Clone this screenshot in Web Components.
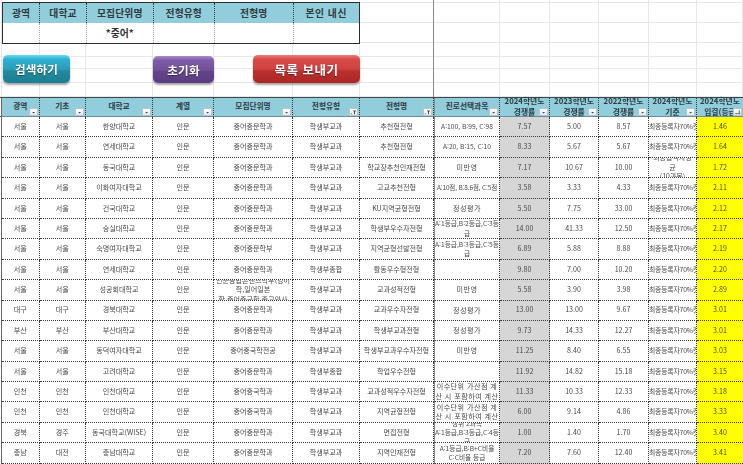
<!doctype html>
<html lang="ko"><head><meta charset="utf-8">
<style>
html,body{margin:0;padding:0;background:#fff;overflow:hidden;width:743px;height:464px}
body{font-family:"Noto Sans CJK KR","Noto Sans",sans-serif;color:#333}
</style></head><body>
<excel-sheet></excel-sheet>
<script>
const COLS=[2,37.5,46.5,67,61,79,67,74,66,50,49,50,48,46];
const TPL=`grid-template-columns:${COLS.map(c=>c+'px').join(' ')}`;
const TITLES=['광역','기초','대학교','계열','모집단위명','전형유형','전형명','진로선택과목','2024학년도<br>경쟁률','2023학년도<br>경쟁률','2022학년도<br>경쟁률','2024학년도<br>기준','2024학년도<br>입결(등급'];
const ISU='<span class="wide">이수단위 가산점 계<br>산 시 포함하여 계산</span>';
const ROWS=[
['서울','서울','한양대학교','중어중문학과','학생부교과','추천형전형','A:100, B:99, C:98','7.57','5.00','8.57','1.46'],
['서울','서울','연세대학교','중어중문학과','학생부교과','추천형전형','A:20, B:15, C:10','8.33','5.67','5.67','1.64'],
['서울','서울','동국대학교','중어중문학과','학생부교과','학교장추천인재전형','<span class="wide">미반영</span>','7.17','10.67','10.00','1.72','x'],
['서울','서울','이화여자대학교','중어중문학과','학생부교과','고교추천전형','<span class="tight">A:10점, B:8.6점, C:5점</span>','3.58','3.33','4.33','2.11'],
['서울','서울','건국대학교','중어중문학과','학생부교과','KU지역균형전형','<span class="wide">정성평가</span>','5.50','7.75','33.00','2.12'],
['서울','서울','숭실대학교','중어중문학과','학생부교과','학생부우수자전형','A:1등급,B:2등급,C:3등<br>급','14.00','41.33','12.50','2.17'],
['서울','서울','숙명여자대학교','중어중문학부','학생부교과','지역균형선발전형','A:1등급,B:3등급,C:5등<br>급','6.89','5.88','8.88','2.19'],
['서울','서울','연세대학교','중어중문학과','학생부종합','활동우수형전형','','9.80','7.00','10.20','2.20'],
['서울','서울','성공회대학교','인문융합콘텐츠학부(영어<br>학,일어일본<br>학,중어중국학,종교와사','학생부교과','교과성적전형','<span class="wide">미반영</span>','5.58','3.90','3.98','2.89'],
['대구','대구','경북대학교','중어중문학과','학생부교과','교과우수자전형','<span class="wide">정성평가</span>','13.00','13.00','9.67','3.01'],
['부산','부산','부산대학교','중어중문학과','학생부교과','학생부교과전형','<span class="wide">정성평가</span>','9.73','14.33','12.27','3.01'],
['서울','서울','동덕여자대학교','중어중국학전공','학생부교과','학생부교과우수자전형','<span class="wide">미반영</span>','11.25','8.40','6.55','3.03'],
['서울','서울','고려대학교','중어중문학과','학생부종합','학업우수전형','','11.92','14.82','15.18','3.15'],
['인천','인천','인천대학교','중어중국학과','학생부교과','교과성적우수자전형',ISU,'11.33','10.33','12.33','3.18'],
['인천','인천','인천대학교','중어중국학과','학생부교과','지역균형전형',ISU,'6.00','9.14','4.86','3.33'],
['경북','경주','동국대학교(WISE)','중어중문학과','학생부교과','면접전형','상위 2과목<br>A:1등급,B:3등급,C:4등<br>급','1.00','1.40','1.70','3.40'],
['충남','대전','충남대학교','중어중문학과','학생부교과','지역인재전형','A:1등급,B:B+C비율<br>C:C비율 등급','7.20','7.60','12.40','3.41'],
];
const DOT='1px dotted #3a3a3a';

class FilterBtn extends HTMLElement{
  constructor(){super();const a=this.hasAttribute('active'),s=this.hasAttribute('sorted');
    this.attachShadow({mode:'open'}).innerHTML=`<style>
    :host{display:flex;align-items:center;justify-content:center;width:9px;height:8px;background:linear-gradient(#fdfdfd,#e6e9eb);border:.5px solid #b9c4ca;box-sizing:border-box;flex:none}
    svg{display:block}</style>
    <svg width="8" height="7" viewBox="0 0 8 7">${a?'<path d="M3.4 1.2h3.6L5.7 3v2.6h-1V3z" fill="#3a3a3a"/><rect x="1" y="4.5" width="1" height="1" fill="#3a3a3a"/>':s?'<path d="M6 1v4M5 4.2l1 1.2 1-1.2" stroke="#333" stroke-width=".8" fill="none"/><rect x="1.5" y="4.4" width="2.5" height="1" fill="#444"/>':'<path d="M2.4 3l1.7 1.7L5.8 3z" fill="#4a4a4a"/>'}</svg>`;}
}
customElements.define('filter-btn',FilterBtn);

class GlossBtn extends HTMLElement{
  constructor(){super();this.attachShadow({mode:'open'}).innerHTML=`<style>
    :host{display:flex;align-items:center;justify-content:center;box-sizing:border-box;border-radius:5px;color:#fff;font-weight:700;
      font-size:var(--fs,12px);letter-spacing:var(--ls,.2px);text-shadow:0 1px 1px rgba(0,0,0,.4);
      background:linear-gradient(var(--a) 0,var(--b) 16%,var(--c) 50%,var(--d) 58%,var(--e) 100%);
      box-shadow:0 1.5px 2px rgba(0,0,0,.35)}
    </style><slot></slot>`;}
}
customElements.define('gloss-btn',GlossBtn);

class TopArea extends HTMLElement{
  constructor(){super();
    const rows=[3,20,20,14,12,14,14];
    let cells='';
    rows.forEach((h,r)=>COLS.forEach((w,c)=>{cells+=`<i style="grid-row:${r+1};grid-column:${c+1}"></i>`}));
    this.attachShadow({mode:'open'}).innerHTML=`<style>
    :host{display:block}
    .g{display:grid;${TPL};grid-template-rows:${rows.map(h=>h+'px').join(' ')}}
    i{border-right:1px solid #e8e8e8;border-bottom:1px solid #e8e8e8;box-sizing:border-box}
    .panel{grid-row:1/4;grid-column:1/8;margin:2px 0 0 2px;display:grid;box-sizing:border-box;width:358px;height:42px;border:1px solid #2e2e2e;
      grid-template-columns:37px 47px 66.5px 61.5px 78.5px 1fr;grid-template-rows:20px 1fr;background:#fff;z-index:1;align-self:start}
    .panel b{background:#92cddc;display:flex;align-items:center;justify-content:center;font-size:9.8px;font-weight:700;color:#2f3a3e;letter-spacing:.1px;border-right:${DOT}}
    .panel b:nth-of-type(6){border-right:0;letter-spacing:.5px}
    .panel span{display:flex;align-items:center;justify-content:center;font-size:9.8px;font-weight:700;color:#333;border-right:1px dotted #9aa}
    .panel span:last-child{border-right:0}
    gloss-btn{z-index:1;align-self:start;grid-row:4/8;margin-top:12px;height:28px}
    .b1{grid-column:1/4;margin-left:3px;width:67px;--fs:11.5px;--a:#5fdcf3;--b:#2fb0cf;--c:#2b9dba;--d:#23899f;--e:#1c7f93}
    .b2{grid-column:5/6;width:61px;margin-top:13px;height:27px;--fs:11.5px;--a:#a98bcb;--b:#7e5ba8;--c:#735297;--d:#63438a;--e:#5a3d80}
    .b3{grid-column:6/9;margin-left:39px;width:107px;--fs:12.5px;--ls:.5px;--a:#f07a78;--b:#d84a48;--c:#cf4240;--d:#b92f2e;--e:#ab2726}
    .line{grid-row:1/8;grid-column:8;justify-self:end;width:1px;background:#8a8a8a;z-index:2}
    </style><div class="g">${cells}
      <div class="panel">
        ${['광역','대학교','모집단위명','전형유형','전형명','본인 내신'].map(t=>`<b>${t}</b>`).join('')}
        <span></span><span></span><span>*중어*</span><span></span><span></span><span></span>
      </div>
      <gloss-btn class="b1">검색하기</gloss-btn>
      <gloss-btn class="b2">초기화</gloss-btn>
      <gloss-btn class="b3">목록 보내기</gloss-btn>
      <div class="line"></div>
    </div>`;}
}
customElements.define('top-area',TopArea);

class DataTable extends HTMLElement{
  constructor(){super();
    let h='<div class="c h e"></div>';
    TITLES.forEach((t,i)=>{
      const two=t.includes('<br>');
      const fb=i===5||i===6?'<filter-btn active></filter-btn>':i===12?'<filter-btn sorted></filter-btn>':'<filter-btn></filter-btn>';
      h+=`<div class="c h ${two?'two':''} ${i===7?'fz':''} ${i===12?'last':''}"><span>${t}</span>${fb}</div>`;
    });
    ROWS.forEach(r=>{
      const [a,b,u,m,t,n,sub,y1,y2,y3,g,x]=r;
      const std=x?'<span class="tri">최종합격자평<br>균<br>(10과목)</span>':'<span class="nw">최종등록자70%컷</span>';
      h+=`<div class="c e"></div><div class="c">${a}</div><div class="c">${b}</div><div class="c">${u}</div><div class="c">인문</div>
      <div class="c"><span>${m}</span></div><div class="c">${t}</div><div class="c nob">${n}</div><div class="c fz sub"><span>${sub}</span></div>
      <div class="c gy">${y1}</div><div class="c">${y2}</div><div class="c">${y3}</div><div class="c std ${x?'':'left'}">${std}</div><div class="c yl">${g}</div>`;
    });
    this.attachShadow({mode:'open'}).innerHTML=`<style>
    :host{display:block}
    .g{display:grid;${TPL};grid-template-rows:19px repeat(17,20.4px);font-size:7.1px;color:#4a4a4a;border-top:1px solid #3c4a50}
    .c{box-sizing:border-box;display:flex;align-items:center;justify-content:center;text-align:center;border-right:${DOT};border-bottom:${DOT};overflow:hidden;line-height:9.5px;min-width:0;padding:0;white-space:nowrap}
    .c.e{border:0;border-right:1px solid #666}
    .h.e{border-right:1px solid #666;background:#fff;border-bottom:1px solid #555}
    .h{background:#92cddc;border-bottom:1px solid #6d8e98;font-weight:700;font-size:7.7px;color:#2d3a40;padding:0 0 3px 0;position:relative;line-height:10px;border-right:${DOT};overflow:visible}
    .h.two{font-size:7.8px;padding:0;line-height:10.6px}
    filter-btn{position:absolute;right:1px;bottom:0}
    .fz{border-left:1px solid #8a8a8a}
    .gy{background:#d6d6d6}
    .yl{background:#ffff00;border-right:0}
    .h.last{justify-content:flex-start;padding-left:3px;border-right:0}
    .nob{overflow:visible}
    .sub{font-size:6.7px;line-height:9.3px}
    .wide{font-size:7.1px;letter-spacing:.45px}
    .tight{letter-spacing:-.15px;font-size:6.5px}
    .nw{font-size:6.8px;letter-spacing:-.15px}
    .left{justify-content:flex-start}
    .tri{display:block;font-size:7px}
    </style><div class="g">${h}</div>`;}
}
customElements.define('data-table',DataTable);

class ExcelSheet extends HTMLElement{
  constructor(){super();this.attachShadow({mode:'open'}).innerHTML=`<style>
    :host{display:block;width:743px;height:464px;overflow:hidden;filter:blur(.3px)}
    </style><top-area></top-area><data-table></data-table>`;}
}
customElements.define('excel-sheet',ExcelSheet);
</script>
</body></html>
